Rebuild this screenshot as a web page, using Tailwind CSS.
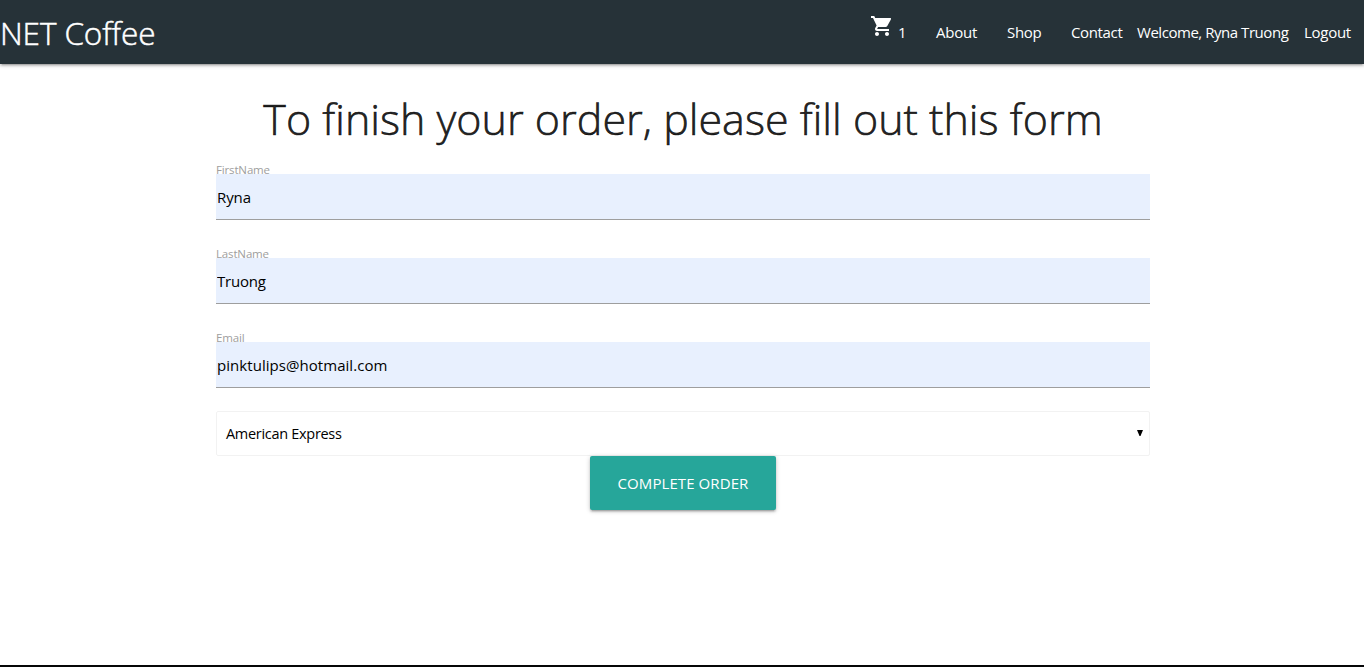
<!DOCTYPE html>
<html lang="en">
<head>
<meta charset="utf-8">
<title>NET Coffee</title>
<script src="https://cdn.jsdelivr.net/npm/@tailwindcss/browser@4"></script>
</head>
<body class="flex h-screen flex-col overflow-hidden bg-white font-['Open_Sans','Noto_Sans',sans-serif] text-[15px] text-black/87">
<nav class="flex h-16 shrink-0 items-center justify-between bg-[#263238] whitespace-nowrap text-white shadow-[0_2px_2px_0_rgba(0,0,0,0.14),0_3px_1px_-2px_rgba(0,0,0,0.12),0_1px_5px_0_rgba(0,0,0,0.2)]">
<a href="#" class="pt-0.5 text-[31.5px] leading-none font-light tracking-[-0.1px] [-webkit-text-stroke:0.5px_currentColor]">NET Coffee</a>
<ul class="flex items-center">
<li class="mr-[30px]"><a href="#" class="flex w-9 justify-between">
<svg class="-mt-[7px] h-6 w-6" viewBox="0 0 24 24" fill="currentColor"><path d="M7 18c-1.1 0-1.99.9-1.99 2S5.9 22 7 22s2-.9 2-2-.9-2-2-2zM1 2v2h2l3.6 7.59-1.35 2.45c-.16.28-.25.61-.25.96 0 1.1.9 2 2 2h12v-2H7.42c-.14 0-.25-.11-.25-.25l.03-.12.9-1.63h7.45c.75 0 1.41-.41 1.75-1.03l3.58-6.49A1 1 0 0 0 20 4H5.21l-.94-2H1zm16 16c-1.1 0-1.99.9-1.99 2s.89 2 1.99 2 2-.9 2-2-.9-2-2-2z"/></svg>
<span class="w-2">1</span></a></li>
<li class="mr-[30px] w-[41px]"><a href="#" class="tracking-[-0.2px]">About</a></li>
<li class="mr-[30px] w-[34px]"><a href="#" class="tracking-[-0.3px]">Shop</a></li>
<li class="mr-[15px] w-[51px]"><a href="#" class="tracking-[-0.35px]">Contact</a></li>
<li class="mr-[15px] w-[152px]"><a href="#" class="tracking-[-0.46px]">Welcome, Ryna Truong</a></li>
<li class="mr-[13px] w-[47px]"><a href="#" class="tracking-[-0.27px]">Logout</a></li>
</ul>
</nav>
<main class="mx-auto w-[934px] grow translate-x-px">
<h1 class="pt-[30px] text-center text-[43px] leading-[50px] font-light whitespace-nowrap [-webkit-text-stroke:0.6px_currentColor]">To finish your order, please fill out this form</h1>
<form>
<div class="flex flex-col pt-[18px]">
<label class="h-3 text-[11.5px] leading-4 tracking-[-0.15px] text-[#9e9e9e]">FirstName</label>
<input class="h-[46px] border-b border-[#9e9e9e] bg-[#e8f0fe] px-px tracking-[-0.1px] text-black outline-none" value="Ryna">
</div>
<div class="flex flex-col pt-[26px]">
<label class="h-3 text-[11.5px] leading-4 tracking-[-0.15px] text-[#9e9e9e]">LastName</label>
<input class="h-[46px] border-b border-[#9e9e9e] bg-[#e8f0fe] px-px tracking-[-0.2px] text-black outline-none" value="Truong">
</div>
<div class="flex flex-col pt-[26px]">
<label class="h-3 text-[11.5px] leading-4 tracking-[-0.15px] text-[#9e9e9e]">Email</label>
<input class="h-[46px] border-b border-[#9e9e9e] bg-[#e8f0fe] px-px tracking-[0.05px] text-black outline-none" value="pinktulips@hotmail.com">
</div>
<div class="mt-[23px] flex h-[45px] items-center justify-between rounded-[2px] border border-[#f2f2f2] bg-white pr-1.5 pl-[9px] text-[14.5px] tracking-[-0.3px] text-black">
<span>American Express</span>
<svg class="-mt-0.5 h-1.5 w-1.5" viewBox="0 0 6 6"><path d="M0 0h6L3.5 6h-1z"/></svg>
</div>
<button type="button" class="mx-auto block h-[54px] w-[186px] rounded-[2px] bg-[#26a69a] text-center tracking-[0.08px] whitespace-nowrap text-white shadow-[0_2px_2px_0_rgba(0,0,0,0.14),0_3px_1px_-2px_rgba(0,0,0,0.12),0_1px_5px_0_rgba(0,0,0,0.2)]">COMPLETE ORDER</button>
</form>
</main>
<footer class="h-0.5 shrink-0 bg-[#050607]"></footer>
</body>
</html>
